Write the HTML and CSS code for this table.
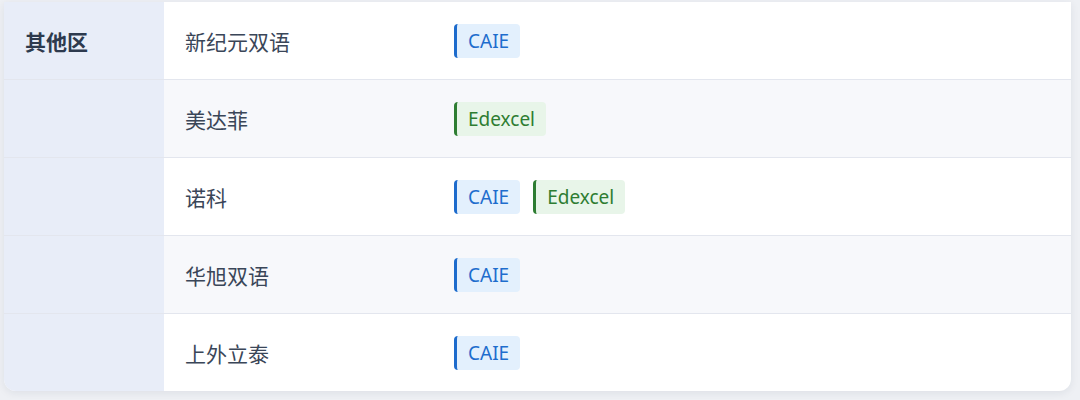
FILE: index.html
```html
<!DOCTYPE html>
<html lang="zh">
<head>
<meta charset="utf-8">
<link rel="stylesheet" href="styles.css">
</head>
<body>
<div class="card">
  <div class="row">
    <div class="cell region">其他区</div>
    <div class="cell name">新纪元双语</div>
    <div class="cell tags"><span class="tag caie">CAIE</span></div>
  </div>
  <div class="row alt">
    <div class="cell region"></div>
    <div class="cell name">美达菲</div>
    <div class="cell tags"><span class="tag edx">Edexcel</span></div>
  </div>
  <div class="row">
    <div class="cell region"></div>
    <div class="cell name">诺科</div>
    <div class="cell tags"><span class="tag caie">CAIE</span><span class="tag edx">Edexcel</span></div>
  </div>
  <div class="row alt">
    <div class="cell region"></div>
    <div class="cell name">华旭双语</div>
    <div class="cell tags"><span class="tag caie">CAIE</span></div>
  </div>
  <div class="row last">
    <div class="cell region"></div>
    <div class="cell name">上外立泰</div>
    <div class="cell tags"><span class="tag caie">CAIE</span></div>
  </div>
</div>
</body>
</html>
```
FILE: styles.css
```css
html, body {
  margin: 0;
  padding: 0;
  background: #eef0f4;
}
body {
  padding: 2px 9px 8px 4px;
  font-family: "Noto Sans", "Noto Sans CJK SC", sans-serif;
}
.card {
  background: #ffffff;
  border-radius: 0 0 12px 12px;
  overflow: hidden;
  box-shadow: 0 2px 8px rgba(30, 40, 70, 0.08);
}
.row {
  display: grid;
  grid-template-columns: 160px 269px 1fr;
  height: 77px;
  border-bottom: 1px solid #e3e6ee;
}
.row.last {
  border-bottom: none;
}
.row.alt .name,
.row.alt .tags {
  background: #f7f8fb;
}
.cell {
  display: flex;
  align-items: center;
  padding-left: 21px;
}
.region {
  background: #e8edf8;
  font-family: "Noto Sans CJK SC", sans-serif;
  font-weight: 700;
  font-size: 21px;
  color: #2d3a4e;
}
.name {
  font-family: "Noto Sans CJK SC", sans-serif;
  font-size: 21px;
  color: #3a4658;
}
.tags {
  gap: 13px;
  padding-left: 21px;
}
.tag {
  display: inline-flex;
  align-items: center;
  height: 34px;
  box-sizing: border-box;
  padding: 0 11px 0 11px;
  border-left: 3px solid;
  border-radius: 4px;
  font-family: "Noto Sans", sans-serif;
  font-size: 19px;
}
.tag.caie {
  background: #e3f0fd;
  border-color: #1d6bcc;
  color: #1e6dcd;
}
.tag.edx {
  background: #e8f5e9;
  border-color: #2e7d32;
  color: #2e7d32;
}
```
